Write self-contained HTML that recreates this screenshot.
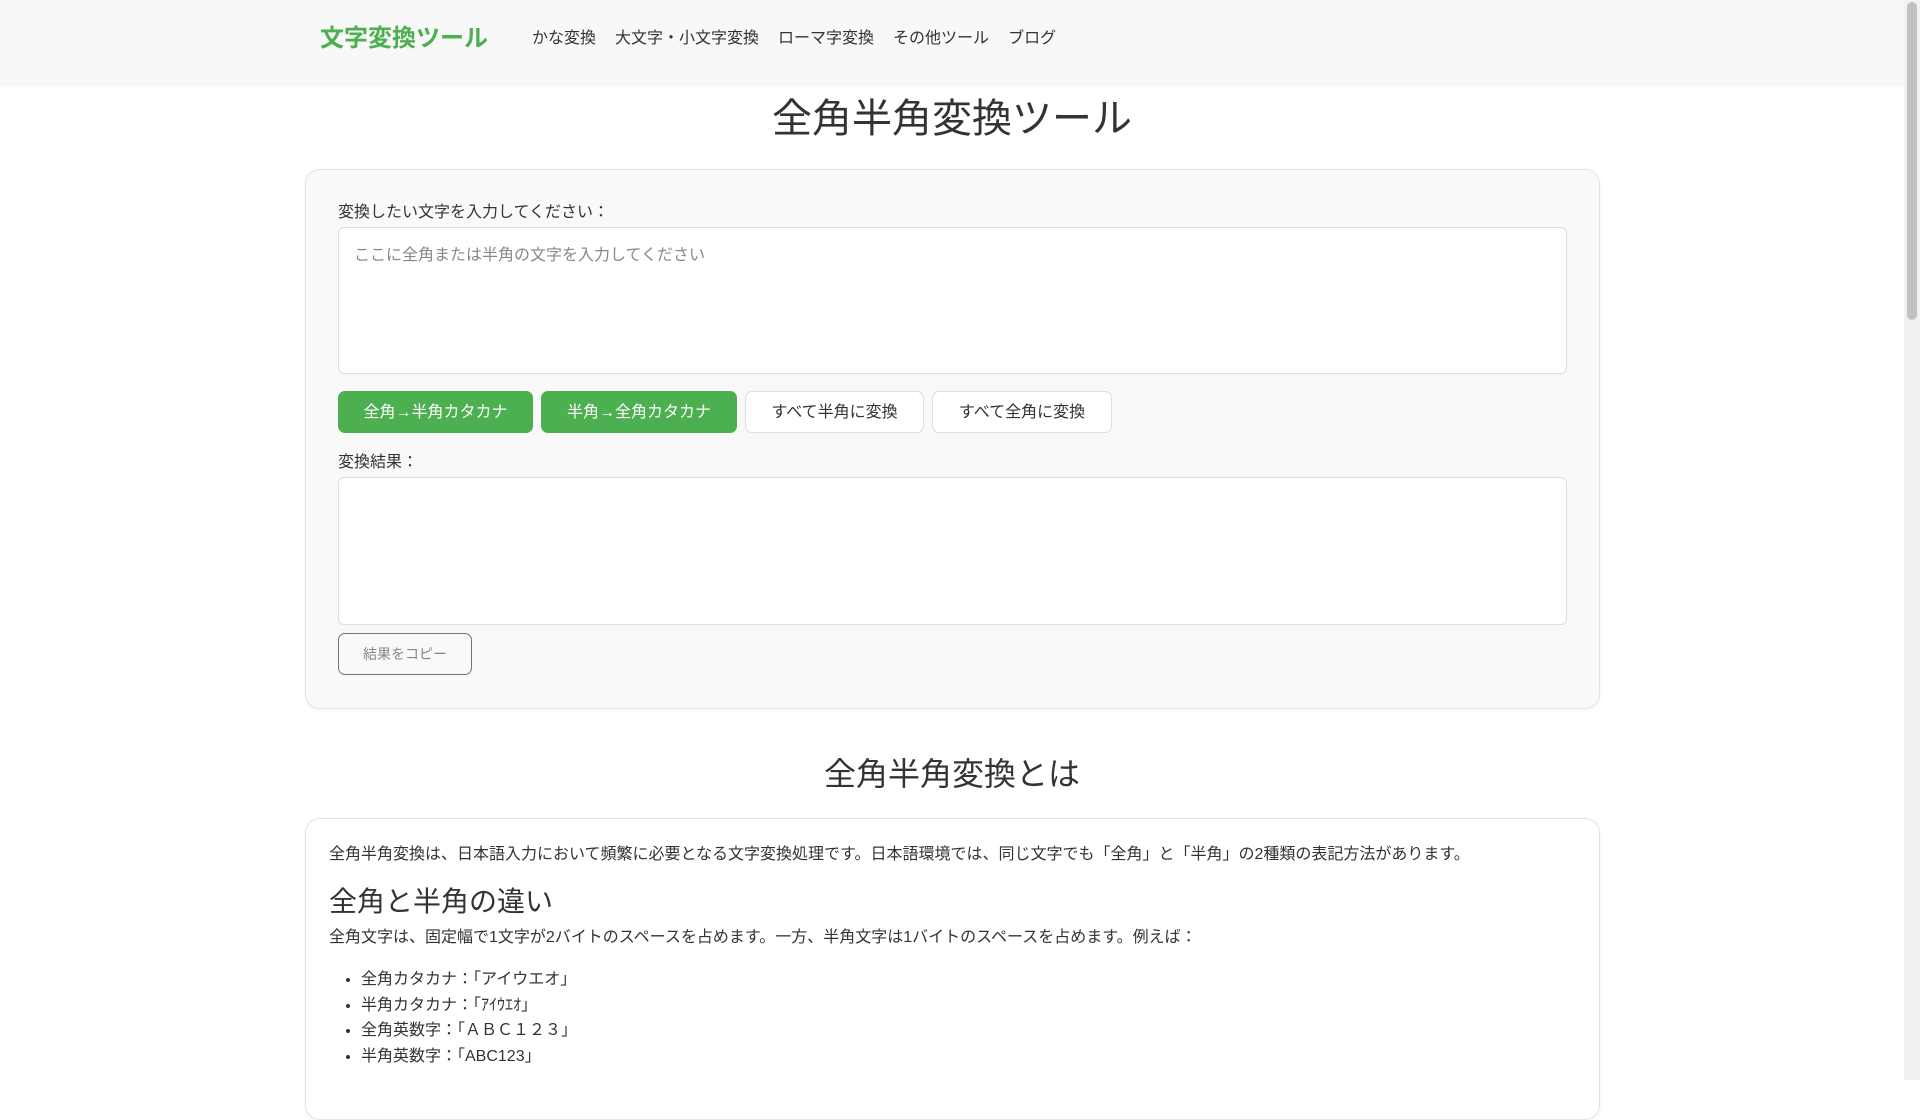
<!DOCTYPE html>
<html lang="ja"><head><meta charset="utf-8">
<style>
html,body{margin:0;padding:0}
body{width:1920px;height:1080px;overflow:hidden;font-family:"Liberation Sans","Noto Sans CJK JP",sans-serif;color:#333;background:#fff;position:relative}
.sb{position:absolute;right:0;top:0;width:16px;height:1080px;background:#f1f1f1}
.sb i{position:absolute;left:3px;top:2px;width:10px;height:318px;background:#c1c1c1;border-radius:5px}
header{position:absolute;left:0;top:0;width:1904px;height:83px;background:#f8f8f8;box-shadow:0 2px 5px rgba(0,0,0,.06)}
.logo{position:absolute;left:320px;top:22px;font-size:24px;font-weight:bold;color:#4caf50;line-height:34px}
nav{position:absolute;left:532px;top:27px;font-size:16px;line-height:24px;color:#333}
nav span{margin-right:19px}
h1{position:absolute;left:0;width:1904px;top:92px;margin:0;text-align:center;font-size:40px;font-weight:normal;line-height:54px}
.card{position:absolute;left:305px;width:1293px;border:1px solid #e3e3e3;border-radius:15px;box-shadow:0 1px 4px rgba(0,0,0,.05)}
.c1{top:169px;height:538px;background:#f9f9f9}
.c2{top:818px;height:300px;background:#fff}
.lab{position:absolute;left:338px;font-size:16px;line-height:22px}
.ta{position:absolute;left:338px;width:1227px;background:#fff;border:1px solid #ddd;border-radius:6px}
.ph{position:absolute;left:354px;top:241px;font-size:16px;color:#888}
.btn{position:absolute;top:391px;height:42px;border-radius:7px;font-size:16px;line-height:42px;text-align:center;box-sizing:border-box}
.g{background:#4caf50;color:#fff;border:1px solid #4caf50}
.w{background:#fff;color:#333;border:1px solid #ddd}
.copy{position:absolute;left:338px;top:633px;width:134px;height:42px;border:1px solid #6c757d;border-radius:7px;box-sizing:border-box;text-align:center;line-height:40px;font-size:14px;color:#888}
h2{position:absolute;left:0;width:1904px;top:752px;margin:0;text-align:center;font-size:32px;font-weight:normal;line-height:44px}
.p{position:absolute;left:329px;font-size:16px;line-height:24px}
h3{position:absolute;left:329px;top:883px;margin:0;font-size:28px;font-weight:normal;line-height:38px}
ul{position:absolute;left:329px;top:967px;margin:0;padding-left:32px;font-size:16px;line-height:25.7px}
</style></head><body>
<header><div class="logo">文字変換ツール</div>
<nav><span>かな変換</span><span>大文字・小文字変換</span><span>ローマ字変換</span><span>その他ツール</span><span>ブログ</span></nav></header>
<h1>全角半角変換ツール</h1>
<div class="card c1"></div>
<div class="lab" style="top:202px">変換したい文字を入力してください：</div>
<div class="ta" style="top:227px;height:145px"></div>
<div class="ph">ここに全角または半角の文字を入力してください</div>
<div class="btn g" style="left:338px;width:195px">全角→半角カタカナ</div>
<div class="btn g" style="left:541px;width:196px">半角→全角カタカナ</div>
<div class="btn w" style="left:745px;width:179px">すべて半角に変換</div>
<div class="btn w" style="left:932px;width:180px">すべて全角に変換</div>
<div class="lab" style="top:452px">変換結果：</div>
<div class="ta" style="top:477px;height:146px"></div>
<div class="copy">結果をコピー</div>
<h2>全角半角変換とは</h2>
<div class="card c2"></div>
<div class="p" style="top:843px">全角半角変換は、日本語入力において頻繁に必要となる文字変換処理です。日本語環境では、同じ文字でも「全角」と「半角」の2種類の表記方法があります。</div>
<h3>全角と半角の違い</h3>
<div class="p" style="top:926px">全角文字は、固定幅で1文字が2バイトのスペースを占めます。一方、半角文字は1バイトのスペースを占めます。例えば：</div>
<ul><li>全角カタカナ：「アイウエオ」</li><li>半角カタカナ：「ｱｲｳｴｵ」</li><li>全角英数字：「ＡＢＣ１２３」</li><li>半角英数字：「ABC123」</li></ul>
<div class="sb"><i></i></div>
</body></html>
